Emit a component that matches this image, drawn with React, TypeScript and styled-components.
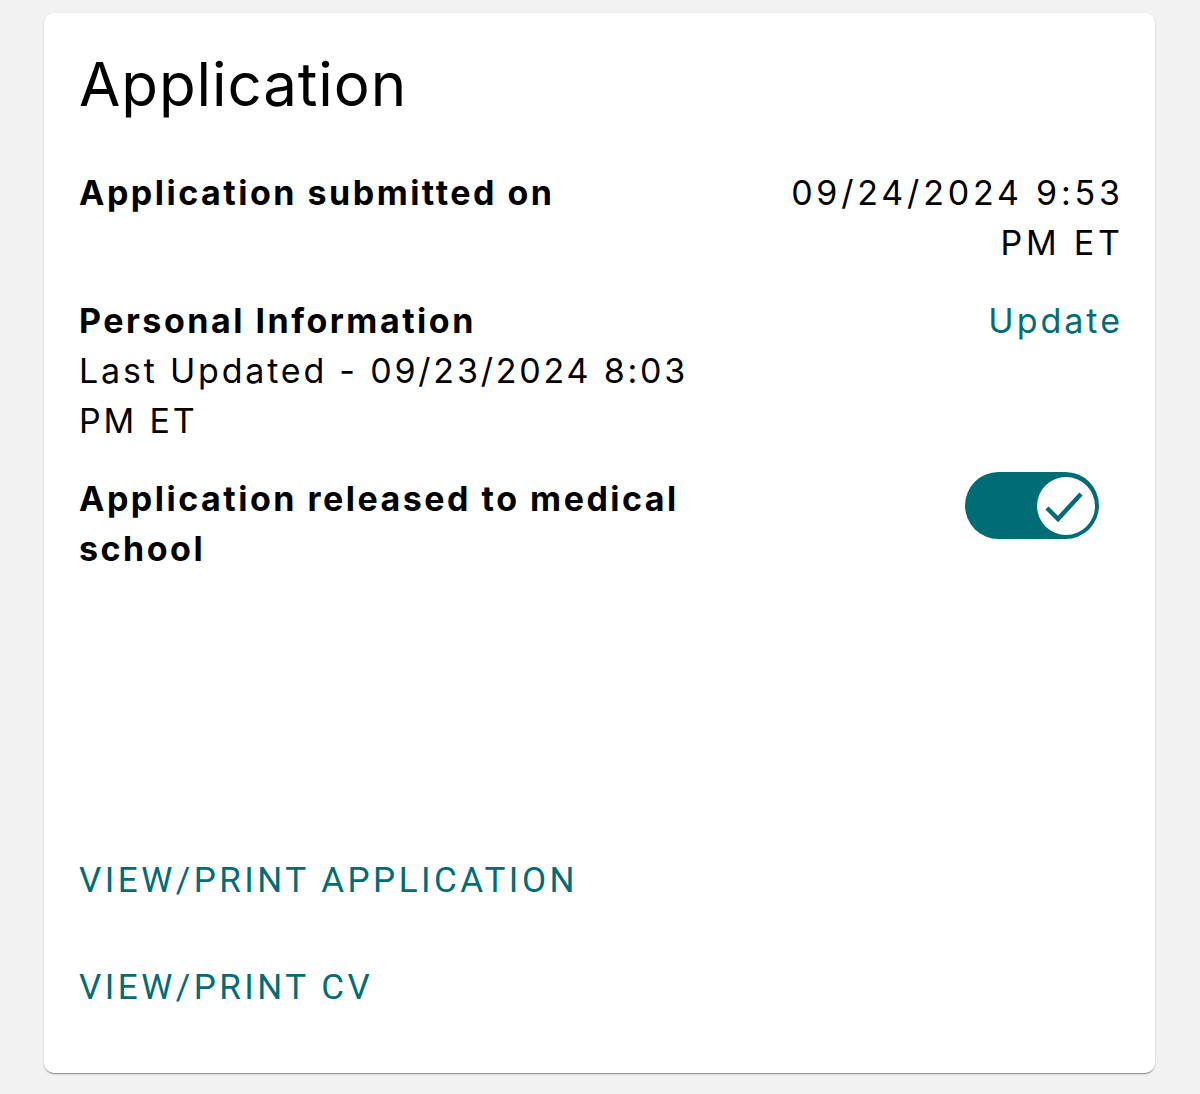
import React from 'react';
import styled, { createGlobalStyle } from 'styled-components';

const TEAL = '#006d75';

const GlobalStyle = createGlobalStyle`
  html, body {
    margin: 0;
    padding: 0;
    background: #f2f2f2;
  }
  body {
    font-family: Inter, "Noto Sans", sans-serif;
    color: #000;
  }
`;

interface InfoRowProps {
  label: string;
  detail?: string;
  children?: React.ReactNode;
}

const InfoRow: React.FC<InfoRowProps> = ({ label, detail, children }) => (
  <Row>
    <RowMain>
      <RowLabel>{label}</RowLabel>
      {detail && <RowDetail>{detail}</RowDetail>}
    </RowMain>
    <RowAside>{children}</RowAside>
  </Row>
);

const ReleaseToggle: React.FC<{ checked: boolean }> = ({ checked }) => (
  <Track role="switch" aria-checked={checked} checked={checked}>
    <Knob>
      {checked && (
        <svg width="58" height="58" viewBox="0 0 58 58">
          <polyline
            points="10,31 21,42 44,17"
            fill="none"
            stroke={TEAL}
            strokeWidth="4.5"
            strokeLinecap="butt"
            strokeLinejoin="miter"
          />
        </svg>
      )}
    </Knob>
  </Track>
);

const App: React.FC = () => (
  <>
    <GlobalStyle />
    <Page>
      <Card>
        <Title>Application</Title>
        <Rows>
          <InfoRow label="Application submitted on">
            <DateText>09/24/2024 9:53 PM ET</DateText>
          </InfoRow>
          <InfoRow
            label="Personal Information"
            detail="Last Updated - 09/23/2024 8:03 PM ET"
          >
            <LinkText href="#">Update</LinkText>
          </InfoRow>
          <InfoRow label="Application released to medical school">
            <ReleaseToggle checked />
          </InfoRow>
        </Rows>
        <Actions>
          <ActionButton type="button">View/Print Application</ActionButton>
          <ActionButton type="button">View/Print CV</ActionButton>
        </Actions>
      </Card>
    </Page>
  </>
);

// Styled Components
const Page = styled.div`
  padding: 13px 45px 21px 44px;
`;

const Card = styled.section`
  box-sizing: border-box;
  height: 1060px;
  display: flex;
  flex-direction: column;
  padding: 35px 35px 55px;
  background: #fff;
  border-radius: 10px;
  box-shadow: 0 2px 1px -1px rgba(0, 0, 0, 0.25), 0 1px 1px 0 rgba(0, 0, 0, 0.14),
    0 1px 3px 0 rgba(0, 0, 0, 0.12);
`;

const Title = styled.h1`
  margin: 0;
  font-size: 60px;
  font-weight: 400;
  line-height: 72px;
  letter-spacing: 0.9px;
`;

const Rows = styled.div`
  margin-top: 48px;
  display: flex;
  flex-direction: column;
  gap: 28px;
`;

const Row = styled.div`
  display: grid;
  grid-template-columns: 640px 1fr;
  column-gap: 40px;
  font-size: 34px;
  line-height: 50px;
`;

const RowMain = styled.div`
  display: flex;
  flex-direction: column;
`;

const RowLabel = styled.div`
  font-weight: 700;
  letter-spacing: 2.5px;
`;

const RowDetail = styled.div`
  font-weight: 400;
  letter-spacing: 2.8px;
`;

const RowAside = styled.div`
  display: flex;
  justify-content: flex-end;
  align-items: flex-start;
  text-align: right;
`;

const DateText = styled.span`
  font-weight: 400;
  letter-spacing: 3.8px;
  margin-right: -3.8px;
`;

const LinkText = styled.a`
  color: ${TEAL};
  text-decoration: none;
  letter-spacing: 3px;
  margin-right: -3px;
`;

const Track = styled.div<{ checked: boolean }>`
  box-sizing: border-box;
  width: 134px;
  height: 67px;
  margin: -2px 21px 0 0;
  padding: 4px;
  border-radius: 34px;
  background: ${props => (props.checked ? TEAL : '#9e9e9e')};
  display: flex;
  justify-content: ${props => (props.checked ? 'flex-end' : 'flex-start')};
  align-items: center;
`;

const Knob = styled.div`
  width: 58px;
  height: 58px;
  border-radius: 50%;
  background: #fff;
  display: flex;
  align-items: center;
  justify-content: center;
`;

const Actions = styled.div`
  margin-top: auto;
  display: flex;
  flex-direction: column;
  align-items: flex-start;
  gap: 46px;
`;

const ActionButton = styled.button`
  padding: 0;
  border: 0;
  background: none;
  cursor: pointer;
  font-family: Roboto, "Liberation Sans", sans-serif;
  font-size: 35px;
  font-weight: 400;
  line-height: 61px;
  letter-spacing: 3.5px;
  text-transform: uppercase;
  color: ${TEAL};
`;

export default App;
